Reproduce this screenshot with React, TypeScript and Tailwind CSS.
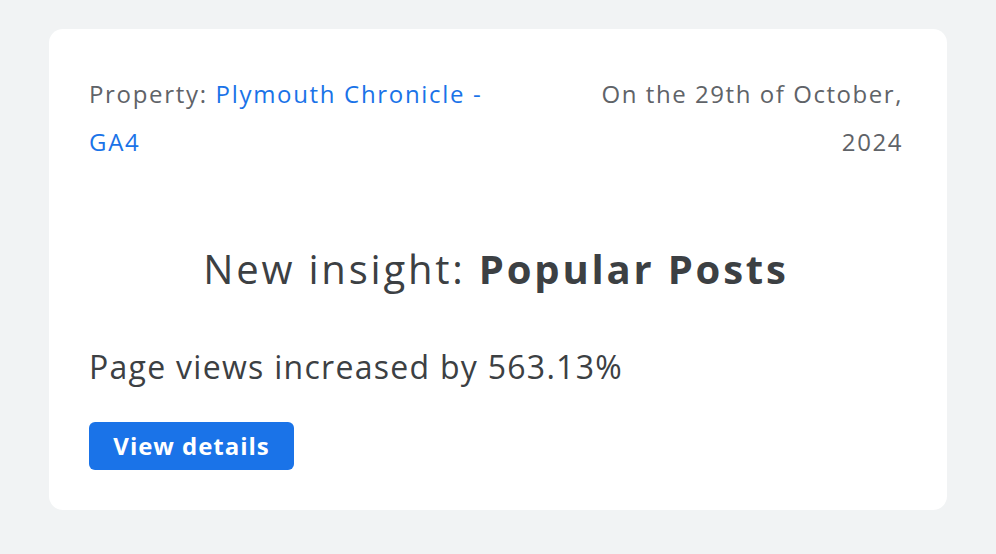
import React from "react";

const InsightCard: React.FC = () => {
  return (
    <div className="w-[898px] h-[481px] rounded-[14px] bg-white pl-10 pr-[44px] pt-[41px]">
      {/* header row */}
      <div className="flex justify-between text-[24px] leading-[48px] tracking-[0.07em] text-[#5f6368]">
        <div className="w-[420px]">
          <p>
            Property: <span className="text-[#1a73e8]">Plymouth Chronicle -</span>
          </p>
          <p className="text-[#1a73e8]">GA4</p>
        </div>
        <p className="w-[330px] text-right tracking-[0.065em]">On the 29th of October, 2024</p>
      </div>

      <h2 className="mt-[79px] text-center text-[40px] leading-[48px] tracking-[0.07em] text-[#3c4043]">
        New insight: <span className="font-bold">Popular Posts</span>
      </h2>

      <p className="mt-[54px] text-[32px] leading-[40px] tracking-[0.04em] text-[#3c4043]">
        Page views increased by 563.13%
      </p>

      <button className="mt-[35px] flex h-[48px] w-[205px] items-center justify-center rounded-[6px] bg-[#1a73e8] text-[24px] font-bold tracking-[0.04em] text-white">
        View details
      </button>
    </div>
  );
};

export default function App() {
  return (
    <div
      className="w-[996px] h-[554px] bg-[#f1f3f4] pl-[49px] pt-[29px]"
      style={{ fontFamily: "'Open Sans', Roboto, sans-serif" }}
    >
      <InsightCard />
    </div>
  );
}
